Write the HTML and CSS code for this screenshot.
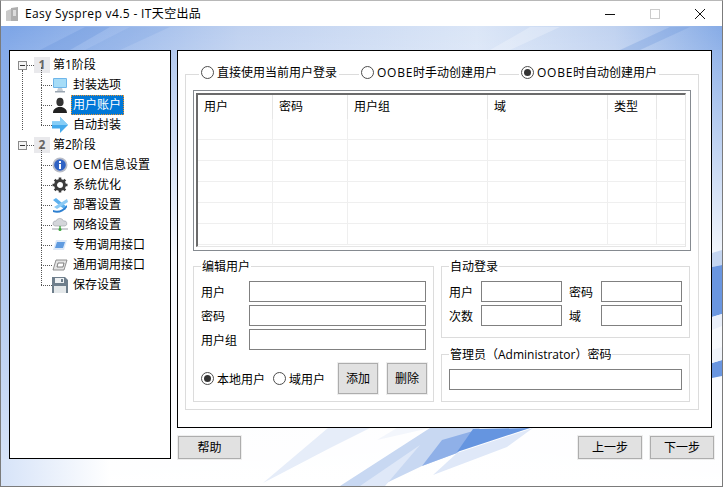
FILE: index.html
```html
<!DOCTYPE html>
<html lang="zh-CN">
<head>
<meta charset="utf-8">
<title>Easy Sysprep v4.5 - IT天空出品</title>
<link rel="stylesheet" href="styles.css">
</head>
<body>
<div class="window">
  <svg class="backdrop" viewBox="0 0 723 487" width="723" height="487" aria-hidden="true">
    <defs>
      <linearGradient id="topBand" x1="0" x2="1" y1="0" y2="0">
        <stop offset="0" stop-color="#7aa3e6"/>
        <stop offset=".33" stop-color="#bfd1f0"/>
        <stop offset=".66" stop-color="#dbe6f7"/>
        <stop offset=".85" stop-color="#c0d2f0"/>
        <stop offset="1" stop-color="#86abe6"/>
      </linearGradient>
      <linearGradient id="fade" x1="0" x2="0" y1="0" y2="1">
        <stop offset="0" stop-color="#fff" stop-opacity="0"/>
        <stop offset=".5" stop-color="#fff" stop-opacity=".9"/>
        <stop offset="1" stop-color="#fff" stop-opacity="1"/>
      </linearGradient>
      <linearGradient id="cornerFade" x1="0" x2="1" y1="0" y2="0">
        <stop offset="0" stop-color="#d6e3f8"/>
        <stop offset="1" stop-color="#fff"/>
      </linearGradient>
      <linearGradient id="leftFade" x1="0" x2="0" y1="0" y2="1">
        <stop offset="0" stop-color="#80a7e8"/>
        <stop offset=".5" stop-color="#a9c3ee"/>
        <stop offset="1" stop-color="#d6e3f8"/>
      </linearGradient>
    </defs>
    <rect x="0" y="26" width="723" height="461" fill="url(#topBand)"/>
    <rect x="0" y="26" width="723" height="461" fill="url(#fade)"/>
    <rect x="0" y="26" width="10" height="435" fill="url(#leftFade)"/>
    <rect x="0" y="459" width="110" height="28" fill="url(#cornerFade)"/>
    <polygon points="40,50 85,27 110,27 70,50" fill="#6a96dc" opacity=".35"/>
    <polygon points="85,50 130,27 170,27 120,50" fill="#6a96dc" opacity=".18"/>
    <polygon points="490,50 530,27 560,27 510,50" fill="#fff" opacity=".25"/>
    <polygon points="620,50 670,27 690,27 640,50" fill="#6a96dc" opacity=".3"/>
    <polygon points="263,483 328,428 370,428 330,448" fill="#e6edf9"/>
    <polygon points="377,440 397,428 430,428" fill="#f3f6fc"/>
    <polygon points="340,486 430,428 480,428 457,453 422,466 380,486" fill="#c8d8f2"/>
    <polygon points="360,486 420,445 385,486" fill="#dfe8f8"/>
    <polygon points="422,466 442,440 480,429 457,453" fill="#8fb0e8"/>
    <polygon points="433,475 457,453 533,428 507,447" fill="#dfe8f8"/>
    <polygon points="457,452 473,429 530,428" fill="#6595e0"/>
    <polygon points="712,253 722,250 722,265 712,267" fill="#c4d5f0"/>
    <polygon points="712,267 722,265 722,314 712,317" fill="#6a96e0"/>
    <polygon points="712,317 722,314 722,326 712,330" fill="#e9effa"/>
    <polygon points="712,363 722,360 722,376 712,378" fill="#6a96e0"/>
    <polygon points="712,350 722,347 722,360 712,363" fill="#f0f4fb"/>
  </svg>

  <header class="titlebar">
    <svg class="app-icon" viewBox="0 0 14 16" width="14" height="16" aria-hidden="true">
      <path d="M1 5 6 3v12H1z" fill="#bdbdbd"/><path d="M6 2l7-1v14H6z" fill="#9a9a9a"/><path d="M8 4h3v6H8z" fill="#d4d4d4"/>
    </svg>
    <span class="title">Easy Sysprep v4.5 - IT天空出品</span>
    <div class="controls">
      <svg viewBox="0 0 10 10" width="10" height="10" aria-hidden="true"><path d="M0 5.5h10" stroke="#111" fill="none"/></svg>
      <svg viewBox="0 0 10 10" width="10" height="10" aria-hidden="true"><rect x=".5" y=".5" width="9" height="9" stroke="#ccc" fill="none"/></svg>
      <svg viewBox="0 0 10 10" width="10" height="10" aria-hidden="true"><path d="M0 0l10 10M10 0 0 10" stroke="#111" fill="none"/></svg>
    </div>
  </header>

  <main class="content">
    <nav class="tree">
      <div class="stage">
        <div class="node top">
          <span class="expander"></span><span class="dash"></span><span class="stage-icon">1</span><span class="label">第1阶段</span>
        </div>
        <div class="node child">
          <svg class="icon" viewBox="0 0 16 16" aria-hidden="true"><rect x="1" y="1" width="14" height="10" rx="1" fill="#6fb6ea"/><rect x="2" y="2" width="12" height="8" fill="#a6dcf7"/><path d="M6 11h4l1 3H5z" fill="#c4ccd4"/><rect x="3" y="14" width="10" height="1.5" fill="#9aa6b2"/></svg>
          <span class="label">封装选项</span>
        </div>
        <div class="node child">
          <svg class="icon" viewBox="0 0 16 16" aria-hidden="true"><ellipse cx="8" cy="5" rx="3.6" ry="4.3" fill="#333"/><path d="M1 16c0-4 3-5 5-6h4c2 1 5 2 5 6z" fill="#222"/></svg>
          <span class="label selected">用户账户</span>
        </div>
        <div class="node child last">
          <svg class="icon" viewBox="0 0 16 16" aria-hidden="true"><path d="M0 4.500h8V0l8 8-8 8v-4.500H0z" fill="#45aaec"/><path d="M0 4.500h8V0l8 8H0z" fill="#86cdf6"/></svg>
          <span class="label">自动封装</span>
        </div>
      </div>
      <div class="stage">
        <div class="node top">
          <span class="expander"></span><span class="dash"></span><span class="stage-icon">2</span><span class="label">第2阶段</span>
        </div>
        <div class="node child">
          <svg class="icon" viewBox="0 0 16 16" aria-hidden="true"><circle cx="8" cy="8" r="7.5" fill="#b8bcc8"/><circle cx="8" cy="8" r="5.8" fill="#2f62c4"/><rect x="7" y="7" width="2" height="5" fill="#fff"/><rect x="7" y="4" width="2" height="2" fill="#fff"/></svg>
          <span class="label"><span class="latin">OEM</span>信息设置</span>
        </div>
        <div class="node child">
          <svg class="icon" viewBox="0 0 16 16" aria-hidden="true"><circle cx="8" cy="8" r="4.500" fill="none" stroke="#3c3c3c" stroke-width="3"/><path d="M8 .5v3M8 12.500v3M.5 8h3M12.500 8h3M2.700 2.700l2.100 2.100M11.200 11.200l2.100 2.100M13.300 2.700l-2.100 2.100M4.800 11.200l-2.100 2.100" stroke="#3c3c3c" stroke-width="2.600"/></svg>
          <span class="label">系统优化</span>
        </div>
        <div class="node child">
          <svg class="icon" viewBox="0 0 16 16" aria-hidden="true"><path d="M1 3l3-2 11 9-2 3z" fill="#5cb0ee"/><path d="M15 2l1 3L5 12l-3-2z" fill="#8ccaf4"/><path d="M1 13c5 2 10 0 14-5v2c-3 5-9 7-14 5z" fill="#2d7fd0"/></svg>
          <span class="label">部署设置</span>
        </div>
        <div class="node child">
          <svg class="icon" viewBox="0 0 16 16" aria-hidden="true"><path d="M3 9a2.500 2.500 0 0 1 1-5 4 4 0 0 1 7.500 0A2.500 2.500 0 0 1 13 9z" fill="#d4d6da" stroke="#9a9ea6" stroke-width=".6"/><path d="M0 12h16" stroke="#9a9ea6"/><path d="M8 9v3" stroke="#3fa63f" stroke-width="1.400"/><circle cx="8" cy="12.500" r="1.500" fill="#3fa63f"/></svg>
          <span class="label">网络设置</span>
        </div>
        <div class="node child">
          <svg class="icon" viewBox="0 0 16 16" aria-hidden="true"><path d="M4 3h11l-3 10H1z" fill="#dbe8f8"/><path d="M5 5h8l-2 6H3z" fill="#5f9be0"/></svg>
          <span class="label">专用调用接口</span>
        </div>
        <div class="node child">
          <svg class="icon" viewBox="0 0 16 16" aria-hidden="true"><path d="M4 3h11l-3 10H1z" fill="#e4e4e4" stroke="#777" stroke-width=".8"/><path d="M6 6h6l-1 4H5z" fill="#fff" stroke="#666" stroke-width=".8"/></svg>
          <span class="label">通用调用接口</span>
        </div>
        <div class="node child last">
          <svg class="icon" viewBox="0 0 16 16" aria-hidden="true"><path d="M0 0h13l3 3v13H0z" fill="#6f7f8c"/><rect x="3" y="1" width="9" height="5" fill="#eef1f3"/><rect x="9" y="2" width="2" height="3" fill="#6f7f8c"/><rect x="2" y="9" width="12" height="7" fill="#e4e8ea"/></svg>
          <span class="label">保存设置</span>
        </div>
      </div>
    </nav>

    <div class="side">
      <section class="panel">
        <div class="mode-group">
          <div class="mode-row">
            <label class="radio mode first"><span class="dot"></span>直接使用当前用户登录</label>
            <label class="radio mode second"><span class="dot"></span><span class="latin">OOBE</span>时手动创建用户</label>
            <label class="radio mode third"><span class="dot on"></span><span class="latin">OOBE</span>时自动创建用户</label>
          </div>

          <div class="table-frame">
            <div class="table-inner">
              <div class="thead">
                <span>用户</span><span>密码</span><span>用户组</span><span>域</span><span>类型</span><span></span>
              </div>
              <div class="trow"><i></i><i></i><i></i><i></i><i></i><i></i></div>
              <div class="trow"><i></i><i></i><i></i><i></i><i></i><i></i></div>
              <div class="trow"><i></i><i></i><i></i><i></i><i></i><i></i></div>
              <div class="trow"><i></i><i></i><i></i><i></i><i></i><i></i></div>
              <div class="trow"><i></i><i></i><i></i><i></i><i></i><i></i></div>
              <div class="trow"><i></i><i></i><i></i><i></i><i></i><i></i></div>
            </div>
          </div>

          <div class="editors">
            <fieldset class="box edit-box">
              <legend>编辑用户</legend>
              <div class="edit-grid">
                <span>用户</span><input class="field" type="text">
                <span>密码</span><input class="field" type="text">
                <span>用户组</span><input class="field" type="text">
              </div>
              <div class="edit-actions">
                <label class="radio"><span class="dot on"></span>本地用户</label>
                <label class="radio domain"><span class="dot"></span>域用户</label>
                <button class="btn small add" type="button">添加</button>
                <button class="btn small" type="button">删除</button>
              </div>
            </fieldset>
            <div class="right-boxes">
              <fieldset class="box login-box">
                <legend>自动登录</legend>
                <div class="login-grid">
                  <span>用户</span><input class="field" type="text">
                  <span>密码</span><input class="field" type="text">
                  <span>次数</span><input class="field" type="text">
                  <span>域</span><input class="field" type="text">
                </div>
              </fieldset>
              <fieldset class="box admin-box">
                <legend>管理员（Administrator）密码</legend>
                <input class="field wide" type="text">
              </fieldset>
            </div>
          </div>
        </div>
      </section>
      <footer class="actions">
        <button class="btn" type="button">帮助</button>
        <div class="nav-btns">
          <button class="btn" type="button">上一步</button>
          <button class="btn" type="button">下一步</button>
        </div>
      </footer>
    </div>
  </main>
</div>
</body>
</html>
```
FILE: styles.css
```css
* { box-sizing: border-box; }
html, body { margin: 0; padding: 0; background: #fff; }
body {
  width: 723px;
  height: 487px;
  overflow: hidden;
  font: 12px/18px "Open Sans", "Noto Sans CJK SC", sans-serif;
  color: #000;
}
.window {
  position: relative;
  width: 723px;
  height: 487px;
  border: 1px solid #7b7b7b;
  border-top-color: #b8b8b8;
  display: flex;
  flex-direction: column;
  overflow: hidden;
}
.backdrop { position: absolute; left: -1px; top: -1px; }
.latin { letter-spacing: .75px; }

.titlebar {
  position: relative;
  height: 25px;
  background: #fff;
  display: flex;
  align-items: center;
  padding-left: 4px;
  flex: none;
}
.app-icon { opacity: .8; margin-top: 1px; }
.title { margin-left: 6px; letter-spacing: .36px; }
.controls {
  margin-left: auto;
  display: flex;
  gap: 35px;
  padding-right: 17px;
  margin-top: 1px;
}
.controls svg { display: block; }

.content {
  position: relative;
  display: flex;
  gap: 6px;
  padding: 24px 0 0 8px;
}
.tree {
  width: 162px;
  height: 409px;
  background: #fff;
  border: 1px solid #000;
  padding: 4px 0 0 8px;
  flex: none;
}
.stage { position: relative; }
.node {
  position: relative;
  height: 20px;
  display: flex;
  align-items: center;
}
.expander {
  position: relative;
  width: 9px;
  height: 9px;
  border: 1px solid #8a8a8a;
  background: #f4f4f4;
}
.expander::after {
  content: "";
  position: absolute;
  left: 1px;
  right: 1px;
  top: 3px;
  height: 1px;
  background: #333;
}
.dash {
  width: 7px;
  border-top: 1px dotted #555;
}
.stage-icon {
  width: 16px;
  height: 16px;
  background: #e9e9ec;
  color: #666;
  font-weight: 700;
  text-align: center;
  line-height: 16px;
  font-size: 12px;
}
.label { margin-left: 5px; white-space: nowrap; }
.top .label { margin-left: 3px; }
.top::before {
  content: "";
  position: absolute;
  left: 4px;
  top: 15px;
  height: 60px;
  border-left: 1px dotted #555;
}
.stage:last-child .top::before { display: none; }
.child { padding-left: 34px; }
.child::before {
  content: "";
  position: absolute;
  left: 23px;
  top: -8px;
  height: 18px;
  border-left: 1px dotted #555;
}
.child::after {
  content: "";
  position: absolute;
  left: 23px;
  width: 11px;
  top: 10px;
  border-top: 1px dotted #555;
}
.icon { width: 16px; height: 16px; flex: none; position: relative; z-index: 1; background: #fff; }
.child .label { margin-left: 5px; }
.child .selected {
  margin-left: 3px;
  padding: 0 2px 0 1px;
  height: 20px;
  line-height: 18px;
  background: #0078d7;
  color: #fff;
  border: 1px dotted #e8932e;
}

.side {
  width: 537px;
  flex: none;
  display: flex;
  flex-direction: column;
}
.panel {
  width: 535px;
  height: 378px;
  background: #fff;
  border: 1px solid #000;
  padding: 23px 12px 0 7px;
}
.mode-group {
  height: 336px;
  border: 1px solid #dcdcdc;
  padding: 0 7px 0 7px;
}
.mode-row {
  position: relative;
  height: 20px;
  margin: -13px 0 8px;
}
.radio {
  display: inline-flex;
  align-items: center;
  white-space: nowrap;
  background: #fff;
  padding-top: 2px;
}
.mode { position: absolute; top: 0; height: 20px; padding: 2px 2px 0; }
.first { left: 6px; }
.second { left: 166px; }
.third { left: 326px; }
.dot {
  position: relative;
  width: 13px;
  height: 13px;
  border: 1px solid #4d4d4d;
  border-radius: 50%;
  margin: -2px 3px 0 0;
  background: #fff;
  flex: none;
}
.dot.on::after {
  content: "";
  position: absolute;
  left: 2px;
  top: 2px;
  width: 7px;
  height: 7px;
  border-radius: 50%;
  background: #333;
}

.table-frame {
  width: 498px;
  height: 161px;
  border: 1px solid #858a90;
  padding: 2px 4px 3px 2px;
}
.table-inner {
  height: 100%;
  border-left: 2px solid #6b6b6b;
  border-top: 2px solid #6b6b6b;
  border-right: 1px solid #e6e6e6;
  border-bottom: 1px solid #e6e6e6;
  overflow: hidden;
}
.thead, .trow {
  display: grid;
  grid-template-columns: 75px 75px 140px 120px 49px 1fr;
}
.thead { height: 24px; }
.thead span {
  padding-left: 6px;
  line-height: 24px;
  border-right: 1px solid #e6e6e6;
}
.thead span:last-child { border-right: 0; }
.trow { height: 21px; border-bottom: 1px solid #efefef; }
.trow i { border-right: 1px solid #efefef; margin-left: 1px; }
.trow i:first-child { margin-left: 0; }
.trow i:last-child { border-right: 0; }

.editors {
  display: flex;
  gap: 7px;
  margin-top: 5px;
}
.box {
  margin: 0;
  border: 1px solid #dcdcdc;
  min-width: 0;
}
.box legend { padding: 2px 1px 0; margin-left: 0; line-height: 18px; }
.edit-box { width: 241px; height: 146px; padding: 5px 7px 0; }
.edit-grid {
  display: grid;
  grid-template-columns: 48px 177px;
  row-gap: 3px;
}
.edit-grid span, .login-grid span { height: 21px; line-height: 23px; }
.field {
  display: block;
  height: 21px;
  width: 100%;
  border: 1px solid #808080;
  background: #fff;
  padding: 0;
  margin: 0;
}
.edit-actions {
  display: flex;
  align-items: center;
  margin-top: 13px;
}
.domain { margin-left: 8px; }
.add { margin-left: 13px; margin-right: 9px; }
.right-boxes { display: flex; flex-direction: column; gap: 6px; width: 249px; }
.login-box { height: 82px; padding: 5px 7px 0; }
.login-grid {
  display: grid;
  grid-template-columns: 32px 81px 39px 81px;
  row-gap: 3px;
  column-gap: 0;
}
.login-grid span:nth-of-type(even) { padding-left: 7px; }
.admin-box { height: 58px; padding: 5px 7px 0; }
.wide { width: 233px; }

.btn {
  font: inherit;
  height: 23px;
  width: 64px;
  padding: 0;
  color: #000;
  background: #e1e1e1;
  border: 1px solid #adadad;
  outline: 1px solid #eeeeee;
}
.small { width: 40px; height: 31px; flex: none; }
.actions {
  display: flex;
  justify-content: space-between;
  margin: 8px 0 0 1px;
}
.actions > .btn { width: 63px; }
.nav-btns { display: flex; gap: 8px; }
.nav-btns .btn { width: 64px; }
```
